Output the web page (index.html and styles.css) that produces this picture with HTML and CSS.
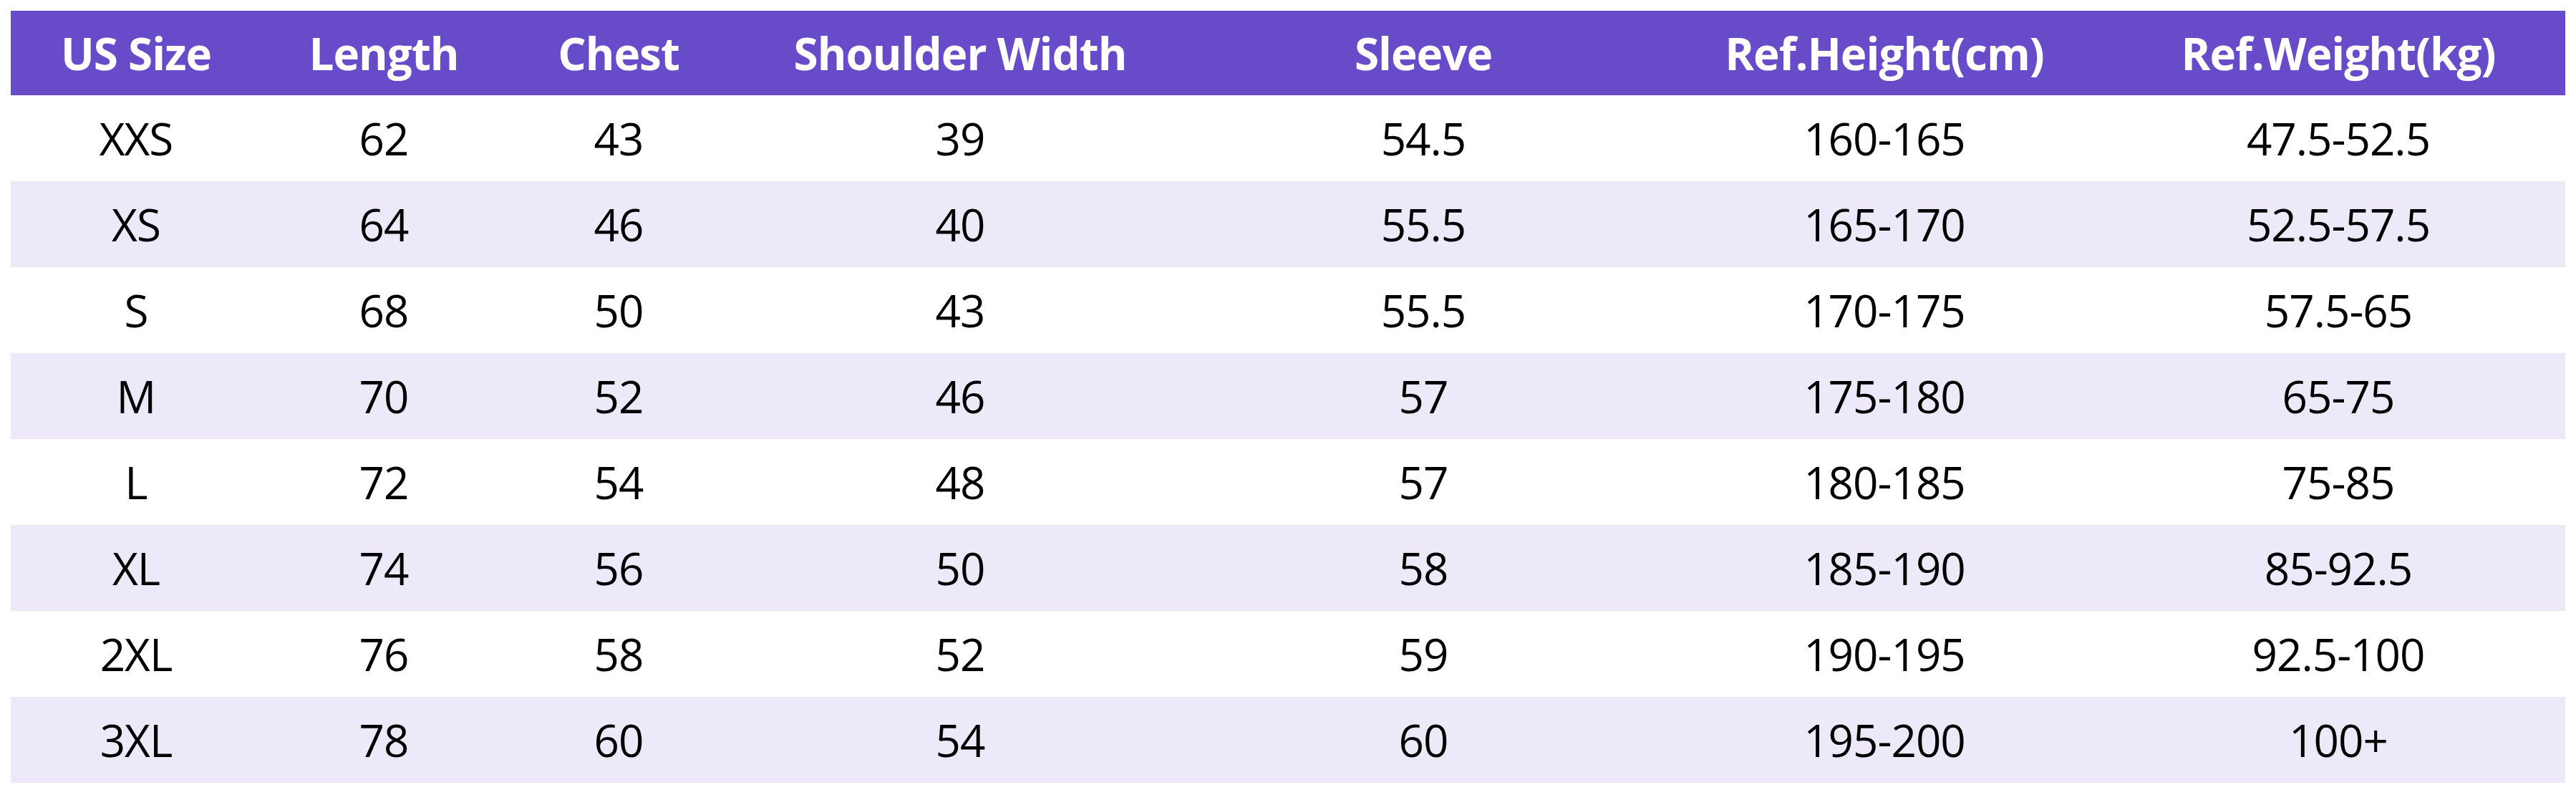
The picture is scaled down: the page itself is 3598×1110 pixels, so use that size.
FILE: index.html
```html
<!DOCTYPE html>
<html>
<head>
<meta charset="utf-8">
<link rel="stylesheet" href="styles.css">
</head>
<body>
<table class="size-table">
  <colgroup>
    <col class="c1"><col class="c2"><col class="c3"><col class="c4"><col class="c5"><col class="c6"><col class="c7">
  </colgroup>
  <thead>
    <tr><th>US Size</th><th>Length</th><th>Chest</th><th>Shoulder Width</th><th>Sleeve</th><th>Ref.Height(cm)</th><th>Ref.Weight(kg)</th></tr>
  </thead>
  <tbody>
    <tr><td>XXS</td><td>62</td><td>43</td><td>39</td><td>54.5</td><td>160-165</td><td>47.5-52.5</td></tr>
    <tr><td>XS</td><td>64</td><td>46</td><td>40</td><td>55.5</td><td>165-170</td><td>52.5-57.5</td></tr>
    <tr><td>S</td><td>68</td><td>50</td><td>43</td><td>55.5</td><td>170-175</td><td>57.5-65</td></tr>
    <tr><td>M</td><td>70</td><td>52</td><td>46</td><td>57</td><td>175-180</td><td>65-75</td></tr>
    <tr><td>L</td><td>72</td><td>54</td><td>48</td><td>57</td><td>180-185</td><td>75-85</td></tr>
    <tr><td>XL</td><td>74</td><td>56</td><td>50</td><td>58</td><td>185-190</td><td>85-92.5</td></tr>
    <tr><td>2XL</td><td>76</td><td>58</td><td>52</td><td>59</td><td>190-195</td><td>92.5-100</td></tr>
    <tr><td>3XL</td><td>78</td><td>60</td><td>54</td><td>60</td><td>195-200</td><td>100+</td></tr>
  </tbody>
</table>
</body>
</html>
```
FILE: styles.css
```css
html, body {
  margin: 0;
  padding: 0;
  background: #ffffff;
}
body {
  padding: 15px;
  font-family: "Open Sans", "Noto Sans", "Liberation Sans", sans-serif;
}
.size-table {
  border-collapse: collapse;
  table-layout: fixed;
  width: 3568px;
}
.c1 { width: 350px; }
.c2 { width: 342px; }
.c3 { width: 314px; }
.c4 { width: 640px; }
.c5 { width: 654px; }
.c6 { width: 634px; }
.c7 { width: 634px; }
.size-table th,
.size-table td {
  padding: 0;
  text-align: center;
  vertical-align: middle;
  white-space: nowrap;
}
.size-table th {
  height: 118px;
  background: #684bc8;
  color: #ffffff;
  font-weight: 700;
  font-size: 62px;
  letter-spacing: -1px;
}
.size-table td {
  height: 120px;
  color: #000000;
  font-size: 62px;
  font-weight: 400;
  letter-spacing: -1px;
}
.size-table tbody tr:nth-child(even) td {
  background: #ede9f9;
}
```
